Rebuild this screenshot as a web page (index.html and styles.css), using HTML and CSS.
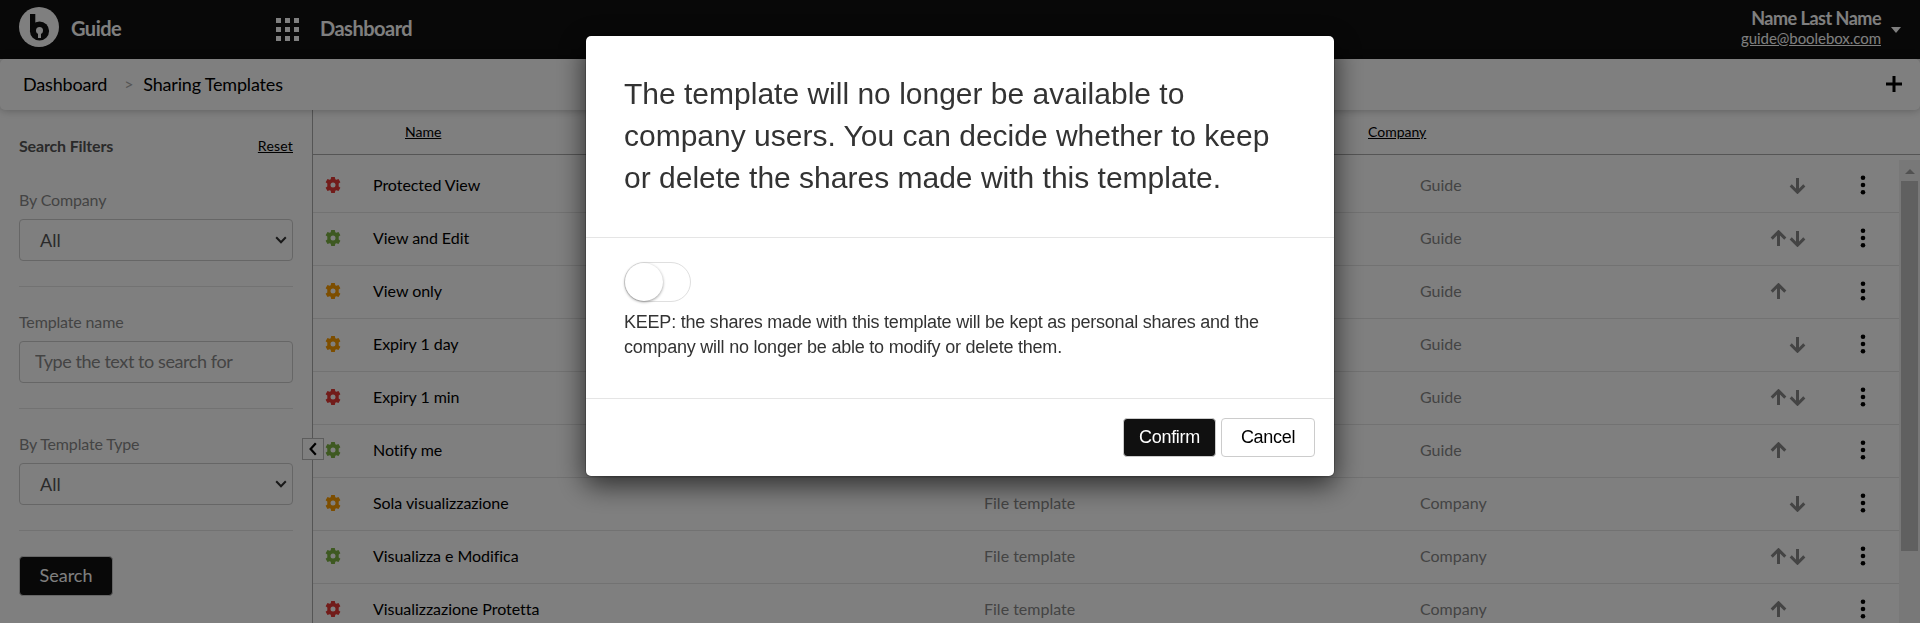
FILE: index.html
```html
<!DOCTYPE html>
<html lang="en">
<head>
  <meta charset="UTF-8">
  <meta name="viewport" content="width=device-width, initial-scale=1.0">
  <title>Sharing Templates</title>
  <link rel="stylesheet" href="styles.css">
</head>
<body>
  <svg class="sprite">
    <symbol id="gear" viewBox="0 0 16 16">
      <path fill-rule="evenodd" d="M6.200 0h3.600l.5 2.200 1 .6 2.200-.8 1.900 3.200-1.700 1.400v2.800l1.700 1.400-1.900 3.200-2.200-.8-1 .6-.5 2.200H6.200l-.5-2.200-1-.6-2.200.8L.6 10.800l1.700-1.400V6.600L.6 5.200 2.500 2l2.200.8 1-.6zM8 5.500a2.500 2.500 0 1 0 0 5 2.500 2.500 0 0 0 0-5z"/>
    </symbol>
    <symbol id="up" viewBox="0 0 17 17">
      <path d="M8.500 16V2M1.700 8.600l6.800-6.800 6.800 6.800"/>
    </symbol>
    <symbol id="down" viewBox="0 0 17 17">
      <path d="M8.500 1v14M1.700 8.400l6.800 6.800 6.800-6.800"/>
    </symbol>
    <symbol id="dots" viewBox="0 0 6 20">
      <circle cx="3" cy="2.700" r="2.300"/><circle cx="3" cy="10" r="2.300"/><circle cx="3" cy="17.300" r="2.300"/>
    </symbol>
    <symbol id="chevron" viewBox="0 0 12 8">
      <path d="M1.200 1.200L6 6.200l4.800-5"/>
    </symbol>
  </svg>

  <header class="topbar">
    <svg class="logo" viewBox="0 0 40 40">
      <circle class="disc" cx="20" cy="20" r="20"/>
      <path class="stem" d="M11 7h5.300v18H11z"/>
      <circle class="stem" cx="20.500" cy="24" r="9.600"/>
      <circle class="disc" cx="20.500" cy="23.500" r="3.500"/>
      <path class="disc" d="M19 25h3v6h-3z"/>
    </svg>
    <span class="brand">Guide</span>
    <svg class="apps" viewBox="0 0 24 23">
      <path d="M0 0h5v5H0zM9 0h5v5H9zM18 0h5v5h-5zM0 9h5v5H0zM9 9h5v5H9zM18 9h5v5h-5zM0 18h5v5H0zM9 18h5v5H9zM18 18h5v5h-5z"/>
    </svg>
    <span class="section">Dashboard</span>
    <div class="user">
      <strong>Name Last Name</strong>
      <a>guide@boolebox.com</a>
    </div>
    <span class="caret"></span>
  </header>

  <nav class="breadcrumb">
    <a>Dashboard</a>
    <span class="sep">&gt;</span>
    <a>Sharing Templates</a>
    <svg class="plus" viewBox="0 0 16 16"><path d="M8 0v16M0 8h16"/></svg>
  </nav>

  <main class="content">
    <aside class="sidebar">
      <div class="filters-title"><strong>Search Filters</strong><a>Reset</a></div>
      <div class="filter">
        <label>By Company</label>
        <div class="select"><span>All</span><svg><use href="#chevron"/></svg></div>
      </div>
      <div class="filter">
        <label>Template name</label>
        <input type="text" placeholder="Type the text to search for">
      </div>
      <div class="filter">
        <label>By Template Type</label>
        <div class="select"><span>All</span><svg><use href="#chevron"/></svg></div>
      </div>
      <button class="search">Search</button>
      <span class="collapse"><svg viewBox="0 0 8 14"><path d="M6.800 1.200L1.600 7l5.200 5.800"/></svg></span>
    </aside>

    <section class="list">
      <div class="list-head">
        <a>Name</a>
        <a>Company</a>
      </div>
      <div class="list-body">
        <div class="rows">
          <div class="row">
            <svg class="gear red"><use href="#gear"/></svg><span class="name">Protected View</span><span></span><span>Guide</span>
            <span class="arrows"><i></i><svg><use href="#down"/></svg></span><svg class="dots"><use href="#dots"/></svg>
          </div>
          <div class="row">
            <svg class="gear green"><use href="#gear"/></svg><span class="name">View and Edit</span><span></span><span>Guide</span>
            <span class="arrows"><svg><use href="#up"/></svg><svg><use href="#down"/></svg></span><svg class="dots"><use href="#dots"/></svg>
          </div>
          <div class="row">
            <svg class="gear orange"><use href="#gear"/></svg><span class="name">View only</span><span></span><span>Guide</span>
            <span class="arrows"><svg><use href="#up"/></svg></span><svg class="dots"><use href="#dots"/></svg>
          </div>
          <div class="row">
            <svg class="gear orange"><use href="#gear"/></svg><span class="name">Expiry 1 day</span><span></span><span>Guide</span>
            <span class="arrows"><i></i><svg><use href="#down"/></svg></span><svg class="dots"><use href="#dots"/></svg>
          </div>
          <div class="row">
            <svg class="gear red"><use href="#gear"/></svg><span class="name">Expiry 1 min</span><span></span><span>Guide</span>
            <span class="arrows"><svg><use href="#up"/></svg><svg><use href="#down"/></svg></span><svg class="dots"><use href="#dots"/></svg>
          </div>
          <div class="row">
            <svg class="gear green"><use href="#gear"/></svg><span class="name">Notify me</span><span></span><span>Guide</span>
            <span class="arrows"><svg><use href="#up"/></svg></span><svg class="dots"><use href="#dots"/></svg>
          </div>
          <div class="row">
            <svg class="gear orange"><use href="#gear"/></svg><span class="name">Sola visualizzazione</span><span>File template</span><span>Company</span>
            <span class="arrows"><i></i><svg><use href="#down"/></svg></span><svg class="dots"><use href="#dots"/></svg>
          </div>
          <div class="row">
            <svg class="gear green"><use href="#gear"/></svg><span class="name">Visualizza e Modifica</span><span>File template</span><span>Company</span>
            <span class="arrows"><svg><use href="#up"/></svg><svg><use href="#down"/></svg></span><svg class="dots"><use href="#dots"/></svg>
          </div>
          <div class="row">
            <svg class="gear red"><use href="#gear"/></svg><span class="name">Visualizzazione Protetta</span><span>File template</span><span>Company</span>
            <span class="arrows"><svg><use href="#up"/></svg></span><svg class="dots"><use href="#dots"/></svg>
          </div>
        </div>
        <div class="scrollbar"><span class="scroll-up"></span><div class="thumb"></div></div>
      </div>
    </section>
  </main>

  <div class="backdrop">
    <div class="modal">
      <div class="modal-header">
        <h4>The template will no longer be available to company users. You can decide whether to keep or delete the shares made with this template.</h4>
      </div>
      <div class="modal-body">
        <div class="switch"><span class="knob"></span></div>
        <p>KEEP: the shares made with this template will be kept as personal shares and the company will no longer be able to modify or delete them.</p>
      </div>
      <div class="modal-footer">
        <button class="confirm">Confirm</button>
        <button class="cancel">Cancel</button>
      </div>
    </div>
  </div>
</body>
</html>
```
FILE: styles.css
```css
* {
  box-sizing: border-box;
}
body {
  margin: 0;
  height: 623px;
  display: flex;
  flex-direction: column;
  overflow: hidden;
  font-family: Lato, sans-serif;
  font-size: 16px;
  color: #000;
  background: #fff;
}
button, input {
  font-family: inherit;
}
.sprite {
  display: none;
}

/* top bar */
.topbar {
  flex: none;
  height: 59px;
  padding: 0 19px;
  display: flex;
  align-items: center;
  background: #101010;
  color: #fff;
}
.logo {
  width: 40px;
  height: 40px;
  margin: -5px 12px 0 0;
}
.disc {
  fill: #fff;
}
.stem {
  fill: #101010;
}
.brand, .section {
  font-size: 20px;
  font-weight: bold;
  letter-spacing: -0.5px;
  margin-top: -4px;
}
.brand {
  width: 205px;
}
.apps {
  width: 24px;
  height: 23px;
  fill: #fff;
}
.section {
  margin-left: 20px;
}
.user {
  margin: -4px 10px 0 auto;
  text-align: right;
  line-height: 20px;
}
.user strong {
  display: block;
  font-size: 18px;
  letter-spacing: -0.5px;
}
.user a {
  font-size: 15px;
  letter-spacing: -0.05px;
  text-decoration: underline;
}
.caret {
  border: 5px solid transparent;
  border-top: 6px solid #fff;
  border-bottom: 0;
}

/* breadcrumb */
.breadcrumb {
  flex: none;
  position: relative;
  z-index: 1;
  height: 51px;
  padding: 0 18px 2px 23px;
  display: flex;
  align-items: center;
  font-size: 18px;
  letter-spacing: -0.18px;
  background: #fff;
  border-radius: 5px;
  box-shadow: 0 0 10px rgba(0, 0, 0, 0.3);
}
.sep {
  margin: 0 10px 0 17px;
  color: #aaa;
  font-size: 16px;
}
.plus {
  width: 16px;
  height: 16px;
  margin-left: auto;
  stroke: #000;
  stroke-width: 3;
}
.content {
  flex: 1;
  min-height: 0;
  display: flex;
}

/* filters */
.sidebar {
  position: relative;
  flex: none;
  width: 313px;
  padding: 24px 19px 0;
  border-right: 1px solid #aaa;
}
.filters-title {
  display: flex;
  justify-content: space-between;
  align-items: center;
  height: 22px;
  margin-bottom: 9px;
}
.filters-title strong {
  color: #555;
  letter-spacing: -0.15px;
}
.filters-title a {
  font-size: 14px;
  letter-spacing: 0.2px;
  text-decoration: underline;
}
.filter {
  height: 122px;
  padding-top: 24px;
  border-bottom: 1px solid #e5e5e5;
}
.filter label {
  display: block;
  height: 30px;
  line-height: 22px;
  letter-spacing: -0.15px;
  color: #888;
}
.select, .filter input {
  width: 100%;
  height: 42px;
  border: 1px solid #ccc;
  border-radius: 4px;
  background: #fff;
  font-size: 18px;
  color: #555;
}
.select {
  display: flex;
  align-items: center;
  justify-content: space-between;
  padding: 0 5px 0 20px;
}
.select svg {
  width: 12px;
  height: 8px;
  fill: none;
  stroke: #333;
  stroke-width: 2;
}
.filter input {
  display: block;
  padding: 0 15px 2px;
  letter-spacing: -0.42px;
}
.filter input::placeholder {
  color: #888;
}
.search {
  width: 94px;
  height: 40px;
  margin-top: 25px;
  padding-bottom: 3px;
  border: 1px solid #ccc;
  border-radius: 4px;
  background: #101010;
  color: #fff;
  font-size: 18px;
}
.collapse {
  position: absolute;
  right: -12px;
  top: 328px;
  width: 22px;
  height: 22px;
  display: flex;
  align-items: center;
  justify-content: center;
  border: 1px solid #bbb;
  background: #fff;
}
.collapse svg {
  width: 8px;
  height: 14px;
  fill: none;
  stroke: #000;
  stroke-width: 2.2;
}

/* templates list */
.list {
  flex: 1;
  display: flex;
  flex-direction: column;
}
.list-head, .row {
  display: grid;
  align-items: center;
}
.list-head {
  flex: none;
  height: 45px;
  grid-template-columns: 963px 1fr;
  padding: 0 0 2px 92px;
  border-bottom: 1px solid #aaa;
  font-size: 14px;
  text-decoration: underline;
}
.list-body {
  flex: 1;
  min-height: 0;
  padding-top: 5px;
  display: flex;
}
.rows {
  flex: 1;
  overflow: hidden;
}
.row {
  height: 53px;
  grid-template-columns: 48px 611px 436px 350px 90px 6px;
  padding: 0 0 2px 12px;
  border-bottom: 1px solid #e5e5e5;
  color: #888;
}
.row span {
  margin-top: -1px;
}
.row .name {
  color: #000;
  letter-spacing: -0.05px;
}
.gear {
  width: 16px;
  height: 16px;
}
.red {
  fill: #e53935;
}
.green {
  fill: #7cb342;
}
.orange {
  fill: #fb9c00;
}
.row .arrows {
  display: flex;
  gap: 2px;
  margin: 0;
}
.arrows svg, .arrows i {
  width: 17px;
  height: 17px;
  fill: none;
  stroke: #888;
  stroke-width: 3;
}
.dots {
  width: 6px;
  height: 20px;
}
.scrollbar {
  width: 21px;
  padding: 9px 2px 0;
  background: #f1f1f1;
}
.scroll-up {
  display: block;
  width: 10px;
  margin: 0 auto 7px;
  border: 5px solid transparent;
  border-top: 0;
  border-bottom-color: #a3a3a3;
}
.thumb {
  height: 370px;
  background: #c1c1c1;
}

/* modal */
.backdrop {
  position: fixed;
  inset: 0;
  z-index: 2;
  padding-top: 35px;
  background: rgba(0, 0, 0, 0.5);
}
.modal {
  width: 750px;
  margin: 0 auto;
  border: 1px solid rgba(0, 0, 0, 0.2);
  border-radius: 6px;
  background: #fff;
  background-clip: padding-box;
  box-shadow: 0 8px 28px rgba(0, 0, 0, 0.65);
  font-family: "Liberation Sans", Arial, sans-serif;
  color: #333;
}
.modal-header {
  height: 202px;
  padding: 37px 38px 0;
  border-bottom: 1px solid #e5e5e5;
}
.modal-header h4 {
  margin: 0;
  font-size: 30px;
  font-weight: normal;
  line-height: 42px;
}
.modal-body {
  height: 160px;
  padding: 24px 38px 0;
}
.switch {
  width: 67px;
  height: 40px;
  border: 1px solid #dfdfdf;
  border-radius: 20px;
}
.knob {
  display: block;
  width: 38px;
  height: 38px;
  border-radius: 50%;
  background: #fff;
  box-shadow: 0 1px 3px rgba(0, 0, 0, 0.4);
}
.modal-body p {
  margin: 8px 0 0;
  font-size: 18px;
  line-height: 25px;
  letter-spacing: -0.22px;
}
.modal-footer {
  height: 78px;
  padding: 19px 19px 0;
  display: flex;
  justify-content: flex-end;
  gap: 5px;
  border-top: 1px solid #e5e5e5;
}
.modal-footer button {
  height: 39px;
  border: 1px solid #ccc;
  border-radius: 4px;
  font-size: 18px;
  letter-spacing: -0.3px;
}
.confirm {
  width: 93px;
  background: #101010;
  color: #fff;
}
.cancel {
  width: 94px;
  background: #fff;
  color: #000;
}
```
